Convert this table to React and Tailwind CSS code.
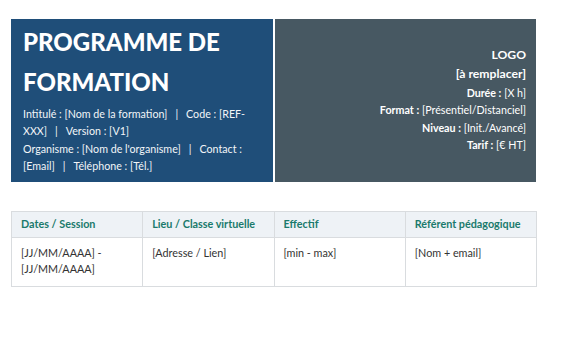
import React from 'react';

const meta = [
  ['Durée :', '[X h]'],
  ['Format :', '[Présentiel/Distanciel]'],
  ['Niveau :', '[Init./Avancé]'],
  ['Tarif :', '[€ HT]'],
];

const cols = [
  { head: 'Dates / Session', body: ['[JJ/MM/AAAA] -', '[JJ/MM/AAAA]'] },
  { head: 'Lieu / Classe virtuelle', body: ['[Adresse / Lien]'] },
  { head: 'Effectif', body: ['[min - max]'] },
  { head: 'Référent pédagogique', body: ['[Nom + email]'] },
];

const Sep = () => <span className="mx-[8px]">|</span>;

export default function App() {
  return (
    <div className="w-[588px] h-[341px] bg-white pl-[11px] pt-[19px] font-['Lato','Open_Sans',sans-serif]">
      {/* Header */}
      <div className="flex gap-[2px] h-[163px] w-[525px]">
        <div className="w-[262px] bg-[#1f4e79] text-white pl-[12px] pt-[3px]">
          <h1 className="text-[24px] font-black leading-[40px]">
            PROGRAMME DE
            <br />
            FORMATION
          </h1>
          <div className="mt-[3px] text-[10.7px] leading-[17.4px] text-[#f2f5f8] whitespace-nowrap">
            <p>
              Intitulé : [Nom de la formation]<Sep />Code : [REF-
            </p>
            <p>
              XXX]<Sep />Version : [V1]
            </p>
            <p>
              Organisme : [Nom de l'organisme]<Sep />Contact :
            </p>
            <p>
              [Email]<Sep />Téléphone : [Tél.]
            </p>
          </div>
        </div>
        <div className="w-[261px] bg-[#475862] text-white text-right pr-[10px] pt-[27px]">
          <div className="text-[12.2px] font-bold leading-[18px]">LOGO</div>
          <div className="text-[12.2px] font-bold leading-[19px]">[à remplacer]</div>
          <div className="mt-[1px] text-[10.7px] leading-[17.4px]">
            {meta.map(([k, v]) => (
              <p key={k}>
                <span className="font-bold">{k}</span> {v}
              </p>
            ))}
          </div>
        </div>
      </div>

      {/* Session table */}
      <table className="mt-[29px] w-[526px] border-collapse table-fixed text-[10.8px]">
        <thead>
          <tr className="bg-[#eef2f6]">
            {cols.map((c) => (
              <th
                key={c.head}
                className="h-[26px] border border-[#d9dcdf] px-[9px] text-left font-bold text-[#1a7a6c]"
              >
                {c.head}
              </th>
            ))}
          </tr>
        </thead>
        <tbody>
          <tr>
            {cols.map((c) => (
              <td
                key={c.head}
                className="h-[49px] border border-[#d9dcdf] px-[9px] pt-[7px] align-top leading-[16px] text-[#333]"
              >
                {c.body.map((line) => (
                  <p key={line}>{line}</p>
                ))}
              </td>
            ))}
          </tr>
        </tbody>
      </table>
    </div>
  );
}
